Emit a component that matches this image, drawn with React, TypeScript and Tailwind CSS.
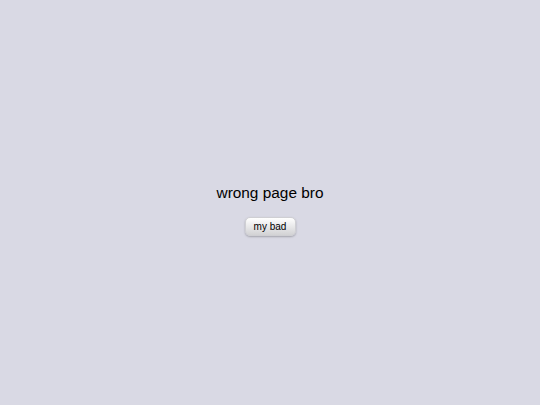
export default function App() {
  return (
    <div
      className="min-h-screen w-full bg-[#d9d9e4] flex flex-col items-center justify-center pt-[14px]"
      style={{ fontFamily: '"Liberation Sans", Arial, sans-serif' }}
    >
      <h1 className="text-[15.4px] leading-[20px] text-black">wrong page bro</h1>
      <button className="mt-[14px] w-[51px] h-[19px] rounded-[5px] text-[10px] leading-none text-black bg-gradient-to-b from-white to-[#d2d2d4] border border-[#cfcfd3] shadow-[0_1px_2px_rgba(0,0,0,0.25)]">
        my bad
      </button>
    </div>
  )
}
